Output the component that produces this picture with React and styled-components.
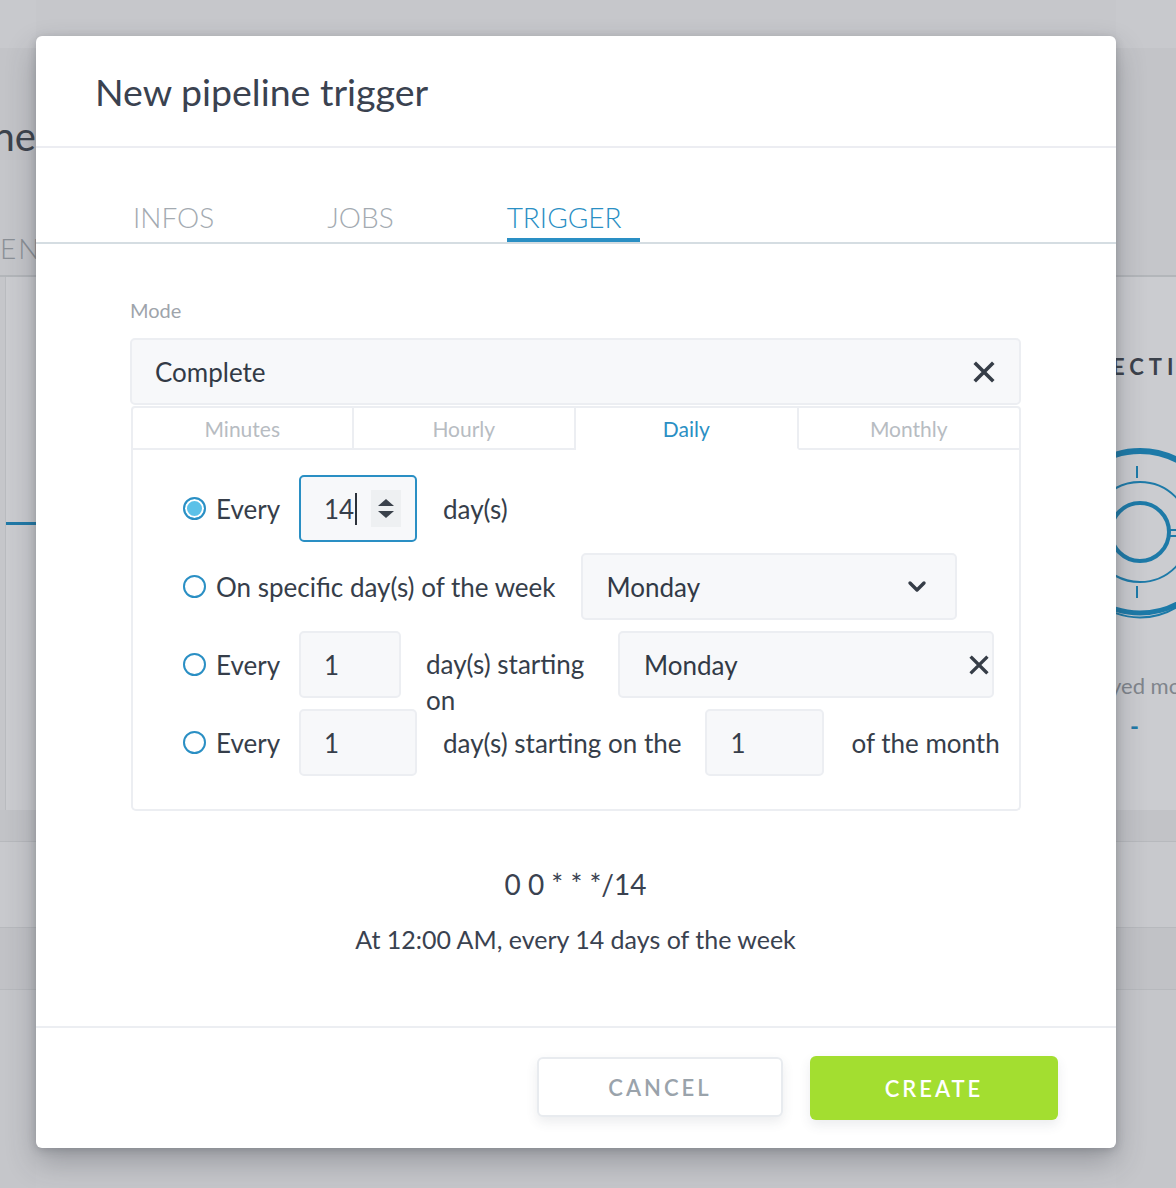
import styled, { createGlobalStyle } from "styled-components";

const GlobalStyle = createGlobalStyle`
  html, body {
    margin: 0;
    padding: 0;
  }
  body {
    font-family: Lato, "Noto Sans", sans-serif;
    background: #c6c7cb;
  }
  * {
    box-sizing: border-box;
  }
`;

const BLUE = "#2a8fc4";
const TEXT = "#363e4a";

const CloseIcon = ({ size = 22 }) => (
  <svg width={size} height={size} viewBox="0 0 22 22">
    <path
      d="M3 3 L19 19 M19 3 L3 19"
      stroke="#363d47"
      strokeWidth="3.6"
      strokeLinecap="square"
      fill="none"
    />
  </svg>
);

const ChevronIcon = () => (
  <svg width="20" height="14" viewBox="0 0 20 14">
    <path
      d="M3 3 L10 10 L17 3"
      stroke="#363d47"
      strokeWidth="3.4"
      strokeLinecap="round"
      strokeLinejoin="round"
      fill="none"
    />
  </svg>
);

const DialIcon = () => (
  <svg width="120" height="176" viewBox="0 0 120 176">
    <g fill="none" stroke="#1d7aa8">
      <path d="M-16 60 A80 80 0 0 1 136 60" strokeWidth="6" />
      <path d="M136 112 A80 80 0 0 1 -16 112" strokeWidth="5" />
      <path d="M128 118 A70 70 0 0 1 -8 118" strokeWidth="2" />
      <circle cx="60" cy="86" r="50" strokeWidth="2" />
      <circle cx="60" cy="86" r="29" strokeWidth="4" />
      <path d="M57 20 V32 M57 140 V152" strokeWidth="2" />
      <path d="M89 84 H120 M89 90 H120" strokeWidth="2" />
    </g>
  </svg>
);

const backdropSides = [
  { key: "left", title: "ne", tab: "ENC" },
  { key: "right", title: "", tab: "" },
];

const App = () => (
  <>
    <GlobalStyle />
    <Backdrop>
      {backdropSides.map((side) => (
        <SideColumn key={side.key}>
          <BgHeader $right={side.key === "right"}>
            <BgTitle>{side.title}</BgTitle>
          </BgHeader>
          <BgTabs>{side.tab}</BgTabs>
          <BgPanel $right={side.key === "right"}>
            {side.key === "left" ? (
              <BgProgress />
            ) : (
              <>
                <BgSection>ECTIONS</BgSection>
                <DialWrap>
                  <DialIcon />
                </DialWrap>
                <BgCaption>yed models</BgCaption>
                <BgDash>-</BgDash>
              </>
            )}
          </BgPanel>
          <BgBand $tone="#c2c3c7" $height={32} />
          <BgBand $tone="#c8c9cd" $height={86} />
          <BgBand $tone="#c1c2c6" $height={62} />
        </SideColumn>
      ))}
    </Backdrop>

    <Modal>
      <Header>
        <Title>New pipeline trigger</Title>
      </Header>
      <TabBar>
        <Tab>INFOS</Tab>
        <Tab>JOBS</Tab>
        <Tab $active>TRIGGER</Tab>
      </TabBar>

      <Body>
        <FieldLabel>Mode</FieldLabel>
        <ModeSelect>
          <span>Complete</span>
          <CloseIcon />
        </ModeSelect>

        <FreqTabs>
          <FreqTab>Minutes</FreqTab>
          <FreqTab>Hourly</FreqTab>
          <FreqTab $active>Daily</FreqTab>
          <FreqTab>Monthly</FreqTab>
        </FreqTabs>

        <FreqPanel>
          <Row>
            <RadioLabel>
              <Radio $checked />
              Every
            </RadioLabel>
            <NumberBox $width={118} $focused>
              14
              <Caret />
              <Spinner>
                <ArrowUp />
                <ArrowDown />
              </Spinner>
            </NumberBox>
            <RowText $gap={26}>day(s)</RowText>
          </Row>

          <Row>
            <RadioLabel $auto>
              <Radio />
              On specific day(s) of the week
            </RadioLabel>
            <SelectBox $gap={25}>
              <span>Monday</span>
              <ChevronIcon />
            </SelectBox>
          </Row>

          <Row>
            <RadioLabel>
              <Radio />
              Every
            </RadioLabel>
            <NumberBox $width={102}>1</NumberBox>
            <WrapText>day(s) starting on</WrapText>
            <SelectBox $gap={20} $clear>
              <span>Monday</span>
              <CloseIcon size={20} />
            </SelectBox>
          </Row>

          <Row>
            <RadioLabel>
              <Radio />
              Every
            </RadioLabel>
            <NumberBox $width={118}>1</NumberBox>
            <RowText $gap={26}>day(s) starting on the</RowText>
            <NumberBox $width={119} $gap={24}>
              1
            </NumberBox>
            <RowText $gap={27}>of the month</RowText>
          </Row>
        </FreqPanel>

        <CronBlock>
          <CronExpr>0 0 * * */14</CronExpr>
          <CronDesc>At 12:00 AM, every 14 days of the week</CronDesc>
        </CronBlock>
      </Body>

      <Footer>
        <CancelButton>CANCEL</CancelButton>
        <CreateButton>CREATE</CreateButton>
      </Footer>
    </Modal>
  </>
);

export default App;

/* ---------- backdrop page (dimmed, behind the dialog) ---------- */

const Backdrop = styled.div`
  width: 1176px;
  height: 1188px;
  overflow: hidden;
  background: #c6c7cb;
  display: grid;
  grid-template-columns: 36px 1fr 60px;
  & > :last-child {
    grid-column: 3;
  }
`;

const SideColumn = styled.div`
  display: flex;
  flex-direction: column;
  overflow: hidden;
  background: #c5c6ca;
`;

const BgHeader = styled.div`
  height: 160px;
  padding-top: 112px;
  display: flex;
  justify-content: flex-end;
  background: linear-gradient(#c8c9cd 0 48px, #c3c4c8 48px);
`;

const BgTitle = styled.div`
  font-size: 40px;
  line-height: 48px;
  color: #3d434c;
  white-space: nowrap;
`;

const BgTabs = styled.div`
  height: 117px;
  padding-top: 70px;
  font-size: 28px;
  font-weight: 300;
  line-height: 36px;
  letter-spacing: 2px;
  color: #8b9096;
  white-space: nowrap;
  border-bottom: 2px solid #b3b6ba;
`;

const BgPanel = styled.div`
  height: 533px;
  margin-left: ${(p) => (p.$right ? "0" : "5px")};
  background: #cbccd0;
  border-left: ${(p) => (p.$right ? "none" : "1px solid #babcc0")};
  display: flex;
  flex-direction: column;
`;

const BgProgress = styled.div`
  margin-top: 245px;
  height: 3px;
  background: #2079a7;
`;

const BgSection = styled.div`
  margin: 76px 0 0 -4px;
  font-size: 22px;
  font-weight: 700;
  letter-spacing: 5px;
  color: #3b414b;
  white-space: nowrap;
`;

const DialWrap = styled.div`
  margin: 66px 0 0 -36px;
  height: 176px;
`;

const BgCaption = styled.div`
  margin: 50px 0 0 -6px;
  font-size: 22px;
  color: #80858c;
  white-space: nowrap;
`;

const BgDash = styled.div`
  margin: 12px 0 0 14px;
  font-size: 24px;
  font-weight: 700;
  color: #2079a7;
`;

const BgBand = styled.div`
  height: ${(p) => p.$height}px;
  background: ${(p) => p.$tone};
  border-bottom: 1px solid #b7b9bd;
`;

/* ---------- dialog ---------- */

const Modal = styled.div`
  position: absolute;
  top: 36px;
  left: 36px;
  width: 1080px;
  background: #fff;
  border-radius: 6px;
  box-shadow: 0 14px 30px rgba(45, 50, 60, 0.3), 0 2px 8px rgba(45, 50, 60, 0.22);
  display: flex;
  flex-direction: column;
  color: ${TEXT};
`;

const Header = styled.div`
  height: 112px;
  padding-left: 59px;
  display: flex;
  align-items: center;
  border-bottom: 2px solid #ecedf2;
`;

const Title = styled.h1`
  margin: 0;
  font-size: 37.5px;
  font-weight: 400;
  color: #3a4250;
`;

const TabBar = styled.div`
  display: flex;
  padding: 51px 0 0 97px;
  border-bottom: 2px solid #d5dde2;
`;

const Tab = styled.div`
  font-size: 28px;
  font-weight: 300;
  line-height: 36px;
  padding: 0 18px 3px 0;
  margin-right: 95px;
  color: ${(p) => (p.$active ? BLUE : "#a3aab1")};
  border-bottom: 4px solid ${(p) => (p.$active ? BLUE : "transparent")};
`;

const Body = styled.div`
  padding: 54px 95px 70px 94px;
`;

const FieldLabel = styled.div`
  font-size: 20px;
  line-height: 24px;
  color: #9ea4ab;
  margin-bottom: 16px;
`;

const ModeSelect = styled.div`
  height: 67px;
  display: flex;
  align-items: center;
  justify-content: space-between;
  padding: 0 24px 0 23px;
  background: #f7f8fa;
  border: 2px solid #eceef2;
  border-radius: 5px;
  font-size: 26px;
  color: #323a46;
`;

const FreqTabs = styled.div`
  margin-top: 1px;
  display: grid;
  grid-template-columns: repeat(4, 1fr);
  margin-left: 1px;
`;

const FreqTab = styled.div`
  height: 44px;
  display: flex;
  align-items: center;
  justify-content: center;
  font-size: 21px;
  color: ${(p) => (p.$active ? BLUE : "#b7bcc2")};
  background: #fff;
  border: 2px solid #eceef2;
  border-left: none;
  border-bottom-color: ${(p) => (p.$active ? "transparent" : "#eceef2")};
  &:first-child {
    border-left: 2px solid #eceef2;
    border-top-left-radius: 4px;
  }
  &:last-child {
    border-top-right-radius: 4px;
  }
`;

const FreqPanel = styled.div`
  margin-left: 1px;
  display: flex;
  flex-direction: column;
  gap: 11px;
  padding: 25px 0 33px 50px;
  border: 2px solid #eceef2;
  border-top: none;
  border-radius: 0 0 5px 5px;
`;

const Row = styled.div`
  height: 67px;
  display: flex;
  align-items: center;
  font-size: 26px;
`;

const RadioLabel = styled.div`
  display: flex;
  align-items: center;
  gap: 10px;
  width: ${(p) => (p.$auto ? "auto" : "116px")};
  line-height: 36px;
  white-space: nowrap;
  color: ${TEXT};
`;

const Radio = styled.span`
  width: 23px;
  height: 23px;
  flex-shrink: 0;
  border-radius: 50%;
  border: 2px solid ${BLUE};
  background: ${(p) => (p.$checked ? "#5cc1e8" : "#fff")};
  box-shadow: inset 0 0 0 2px #fff;
`;

const NumberBox = styled.div`
  width: ${(p) => p.$width}px;
  height: 67px;
  margin-left: ${(p) => p.$gap || 0}px;
  flex-shrink: 0;
  display: flex;
  align-items: center;
  padding: 0 14px 0 23px;
  background: #f7f8fa;
  border: 2px solid ${(p) => (p.$focused ? BLUE : "#eceef2")};
  border-radius: 5px;
  font-size: 26px;
  color: ${TEXT};
`;

const Caret = styled.span`
  width: 2px;
  height: 32px;
  margin-left: 1px;
  background: #2c323b;
`;

const Spinner = styled.div`
  margin-left: auto;
  width: 30px;
  height: 37px;
  background: #eef0f2;
  display: flex;
  flex-direction: column;
  align-items: center;
  justify-content: center;
  gap: 5px;
`;

const ArrowUp = styled.span`
  width: 0;
  height: 0;
  border-left: 8px solid transparent;
  border-right: 8px solid transparent;
  border-bottom: 7px solid #3a414b;
`;

const ArrowDown = styled(ArrowUp)`
  border-bottom: none;
  border-top: 7px solid #3a414b;
`;

const RowText = styled.span`
  margin-left: ${(p) => p.$gap}px;
  line-height: 36px;
  white-space: nowrap;
  color: ${TEXT};
`;

const WrapText = styled.span`
  align-self: flex-start;
  width: 172px;
  margin-left: 25px;
  padding-top: 15px;
  line-height: 36px;
  color: ${TEXT};
`;

const SelectBox = styled.div`
  width: 376px;
  height: 67px;
  margin-left: ${(p) => p.$gap}px;
  flex-shrink: 0;
  display: flex;
  align-items: center;
  justify-content: space-between;
  padding: ${(p) => (p.$clear ? "0 3px 0 24px" : "0 28px 0 24px")};
  background: #f7f8fa;
  border: 2px solid #eceef2;
  border-radius: 5px;
  font-size: 26px;
  color: #323a46;
`;

const CronBlock = styled.div`
  margin-top: 55px;
  text-align: center;
`;

const CronExpr = styled.div`
  font-size: 28px;
  line-height: 36px;
  color: #3a4250;
`;

const CronDesc = styled.div`
  margin-top: 20px;
  font-size: 25px;
  line-height: 34px;
  color: #3a4250;
`;

const Footer = styled.div`
  display: flex;
  justify-content: flex-end;
  align-items: flex-start;
  gap: 27px;
  padding: 28px 58px 28px;
  border-top: 2px solid #eceef2;
`;

const BaseButton = styled.button`
  font-family: inherit;
  font-size: 22px;
  font-weight: 600;
  letter-spacing: 3px;
  border-radius: 6px;
  cursor: pointer;
  box-shadow: 0 5px 12px rgba(60, 70, 90, 0.1);
`;

const CancelButton = styled(BaseButton)`
  margin-top: 1px;
  width: 246px;
  height: 60px;
  background: #fff;
  color: #9aa3ab;
  border: 2px solid #e8ebef;
`;

const CreateButton = styled(BaseButton)`
  width: 248px;
  height: 64px;
  background: #a3de30;
  color: #fff;
  border: none;
`;
